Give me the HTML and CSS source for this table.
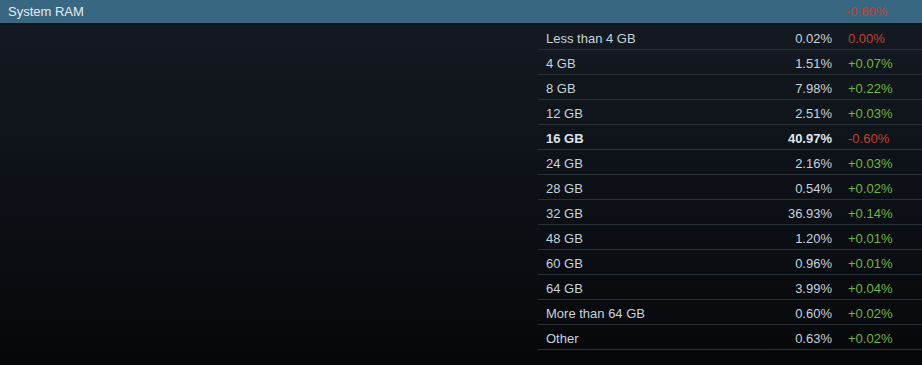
FILE: index.html
```html
<!DOCTYPE html>
<html>
<head>
<meta charset="utf-8">
<link rel="stylesheet" href="styles.css">
</head>
<body>
<div class="page">
  <div class="header">
    <span class="header-title">System RAM</span>
    <span class="header-change neg">-0.60%</span>
  </div>
  <div class="content">
    <div class="spacer"></div>
    <div class="table">
      <div class="row"><span class="label">Less than 4 GB</span><span class="pct">0.02%</span><span class="chg neg">0.00%</span></div>
      <div class="row"><span class="label">4 GB</span><span class="pct">1.51%</span><span class="chg pos">+0.07%</span></div>
      <div class="row"><span class="label">8 GB</span><span class="pct">7.98%</span><span class="chg pos">+0.22%</span></div>
      <div class="row"><span class="label">12 GB</span><span class="pct">2.51%</span><span class="chg pos">+0.03%</span></div>
      <div class="row bold"><span class="label">16 GB</span><span class="pct">40.97%</span><span class="chg neg">-0.60%</span></div>
      <div class="row"><span class="label">24 GB</span><span class="pct">2.16%</span><span class="chg pos">+0.03%</span></div>
      <div class="row"><span class="label">28 GB</span><span class="pct">0.54%</span><span class="chg pos">+0.02%</span></div>
      <div class="row"><span class="label">32 GB</span><span class="pct">36.93%</span><span class="chg pos">+0.14%</span></div>
      <div class="row"><span class="label">48 GB</span><span class="pct">1.20%</span><span class="chg pos">+0.01%</span></div>
      <div class="row"><span class="label">60 GB</span><span class="pct">0.96%</span><span class="chg pos">+0.01%</span></div>
      <div class="row"><span class="label">64 GB</span><span class="pct">3.99%</span><span class="chg pos">+0.04%</span></div>
      <div class="row"><span class="label">More than 64 GB</span><span class="pct">0.60%</span><span class="chg pos">+0.02%</span></div>
      <div class="row"><span class="label">Other</span><span class="pct">0.63%</span><span class="chg pos">+0.02%</span></div>
    </div>
  </div>
</div>
</body>
</html>
```
FILE: styles.css
```css
html, body {
  margin: 0;
  padding: 0;
  height: 100%;
}
body {
  background: linear-gradient(to bottom, #151b23 0%, #0d1117 50%, #060709 100%);
  font-family: "Liberation Sans", Arial, sans-serif;
  font-size: 13px;
  color: #c6d4df;
}
.page {
  min-height: 365px;
}
.header {
  height: 23px;
  background: #386782;
  border-bottom: 2px solid #0f151c;
  display: flex;
  align-items: center;
  color: #e6ecf0;
}
.header-title {
  padding-left: 8px;
  flex: 1;
}
.header-change {
  width: 76px;
}
.content {
  display: flex;
}
.spacer {
  width: 538px;
  flex: none;
}
.table {
  flex: 1;
}
.row {
  display: flex;
  align-items: center;
  padding-top: 2px;
  box-sizing: border-box;
  height: 25px;
  border-bottom: 1px solid #283038;
}
.label {
  flex: 1;
  padding-left: 8px;
}
.pct {
  text-align: right;
}
.chg {
  width: 90px;
  padding-left: 16px;
  box-sizing: border-box;
}
.bold .label, .bold .pct {
  font-weight: bold;
  color: #dfe6eb;
}
.neg {
  color: #c4402f;
}
.pos {
  color: #72b63c;
}
```
